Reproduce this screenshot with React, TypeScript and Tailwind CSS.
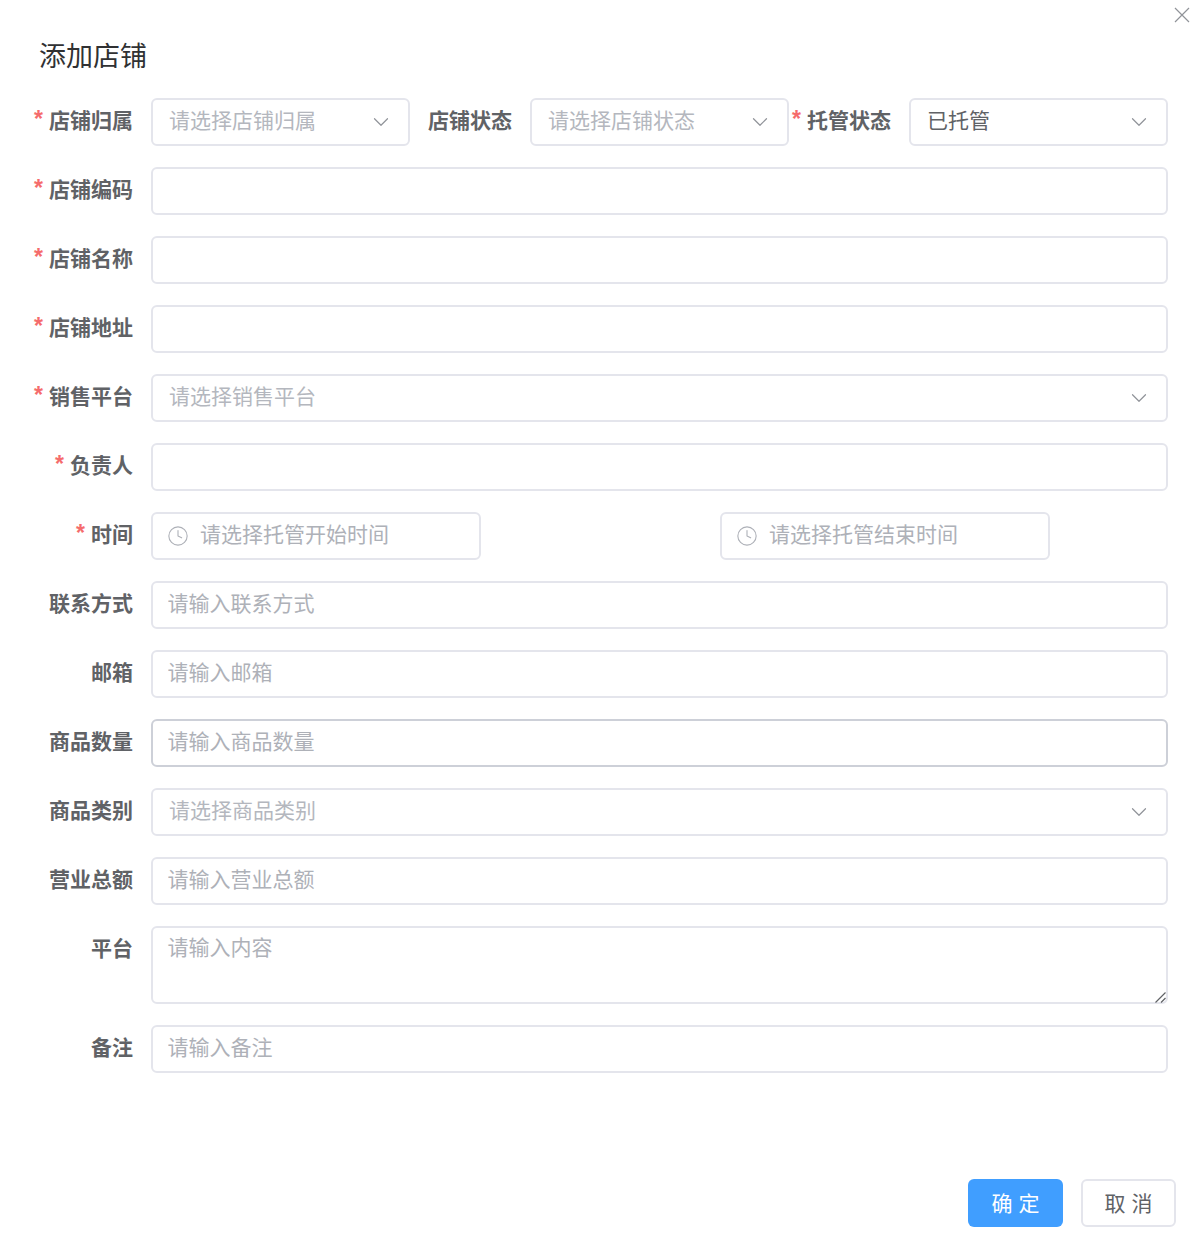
import { ChevronDown, Clock } from 'lucide-react';

const fieldBox = 'h-12 rounded-[6px] border-2 bg-white text-[21px]';

function Label({ text, required, width = 'w-[133px]' }: { text: string; required?: boolean; width?: string }) {
  return (
    <div className={`${width} flex h-12 shrink-0 items-center justify-end whitespace-nowrap pb-[2px] text-[21px] font-bold text-[#606266]`}>
      {required && <span className="mb-[3px] mr-[6px] text-[23px] leading-none text-[#f56c6c]">*</span>}
      {text}
    </div>
  );
}

function Select({ placeholder, value, className = 'flex-1' }: { placeholder?: string; value?: string; className?: string }) {
  return (
    <div className={`${fieldBox} ${className} flex items-center justify-between border-[#e4e5ec] pl-[16px] pr-[14px]`}>
      <span className={`pb-[2px] ${value ? 'text-[#606266]' : 'text-[#b4b7be]'}`}>{value ?? placeholder}</span>
      <ChevronDown size={26} strokeWidth={1.1} className="text-[#909399]" />
    </div>
  );
}

function TextInput({ placeholder, hovered }: { placeholder?: string; hovered?: boolean }) {
  return (
    <input
      readOnly
      placeholder={placeholder}
      className={`${fieldBox} min-w-0 flex-1 px-[14.5px] pb-[2px] outline-none placeholder:text-[#aeb1b8] ${hovered ? 'border-[#cdd0d8]' : 'border-[#e4e5ec]'}`}
    />
  );
}

function TimePicker({ placeholder }: { placeholder: string }) {
  return (
    <div className={`${fieldBox} flex w-[330px] items-center border-[#e4e5ec] pl-[14px] text-[#aeb1b8]`}>
      <Clock size={22} strokeWidth={1.2} className="mr-[11px] text-[#aeb1b8]" />
      <span className="pb-[2px]">{placeholder}</span>
    </div>
  );
}

function Row({ label, required, children }: { label: string; required?: boolean; children: React.ReactNode }) {
  return (
    <div className="flex gap-[18px]">
      <Label text={label} required={required} />
      {children}
    </div>
  );
}

export default function App() {
  return (
    <div
      className="relative flex h-[1251px] flex-col bg-white pr-[26px]"
      style={{ fontFamily: '"Liberation Sans", "Noto Sans CJK SC", sans-serif' }}
    >
      <button className="absolute right-[4px] top-[7px] text-[#909399]">
        <svg width="16" height="16" viewBox="0 0 16 16" fill="none" stroke="currentColor" strokeWidth="1.2">
          <path d="M1 1 15 15M15 1 1 15" />
        </svg>
      </button>

      <h1 className="pl-[39px] pt-[39px] text-[27px] leading-[36px] text-[#303133]">添加店铺</h1>

      <div className="mt-[23px] flex flex-col gap-[21px]">
        <div className="flex">
          <Label text="店铺归属" required />
          <Select placeholder="请选择店铺归属" className="ml-[18px] w-[259px]" />
          <Label text="店铺状态" width="w-[102px]" />
          <Select placeholder="请选择店铺状态" className="ml-[18px] w-[259px]" />
          <Label text="托管状态" required width="w-[102px]" />
          <Select value="已托管" className="ml-[18px] w-[259px]" />
        </div>
        <Row label="店铺编码" required><TextInput /></Row>
        <Row label="店铺名称" required><TextInput /></Row>
        <Row label="店铺地址" required><TextInput /></Row>
        <Row label="销售平台" required><Select placeholder="请选择销售平台" /></Row>
        <Row label="负责人" required><TextInput /></Row>
        <Row label="时间" required>
          <div className="flex gap-[239px]">
            <TimePicker placeholder="请选择托管开始时间" />
            <TimePicker placeholder="请选择托管结束时间" />
          </div>
        </Row>
        <Row label="联系方式"><TextInput placeholder="请输入联系方式" /></Row>
        <Row label="邮箱"><TextInput placeholder="请输入邮箱" /></Row>
        <Row label="商品数量"><TextInput placeholder="请输入商品数量" hovered /></Row>
        <Row label="商品类别"><Select placeholder="请选择商品类别" /></Row>
        <Row label="营业总额"><TextInput placeholder="请输入营业总额" /></Row>
        <Row label="平台">
          <div className="relative flex h-[78px] flex-1">
            <textarea
              readOnly
              placeholder="请输入内容"
              className="flex-1 resize-none rounded-[6px] border-2 border-[#e4e5ec] bg-white px-[14.5px] py-[4px] text-[21px] leading-[32px] outline-none placeholder:text-[#aeb1b8]"
            />
            <svg className="absolute bottom-[1px] right-[2px] text-[#606266]" width="11" height="11" viewBox="0 0 11 11" fill="none" stroke="currentColor" strokeWidth="1.2">
              <path d="M0.5 10.5 10.5 0.5M6 10.5 10.5 6" />
            </svg>
          </div>
        </Row>
        <Row label="备注"><TextInput placeholder="请输入备注" /></Row>
      </div>

      <div className="-mr-[8px] mt-[106px] flex justify-end gap-[18px]">
        <button className="h-12 w-[95px] rounded-[6px] bg-[#409eff] pt-[2px] text-[21px] text-white">确 定</button>
        <button className="h-12 w-[95px] rounded-[6px] border-2 border-[#e4e5ec] bg-white pt-[2px] text-[21px] text-[#606266]">取 消</button>
      </div>
    </div>
  );
}
